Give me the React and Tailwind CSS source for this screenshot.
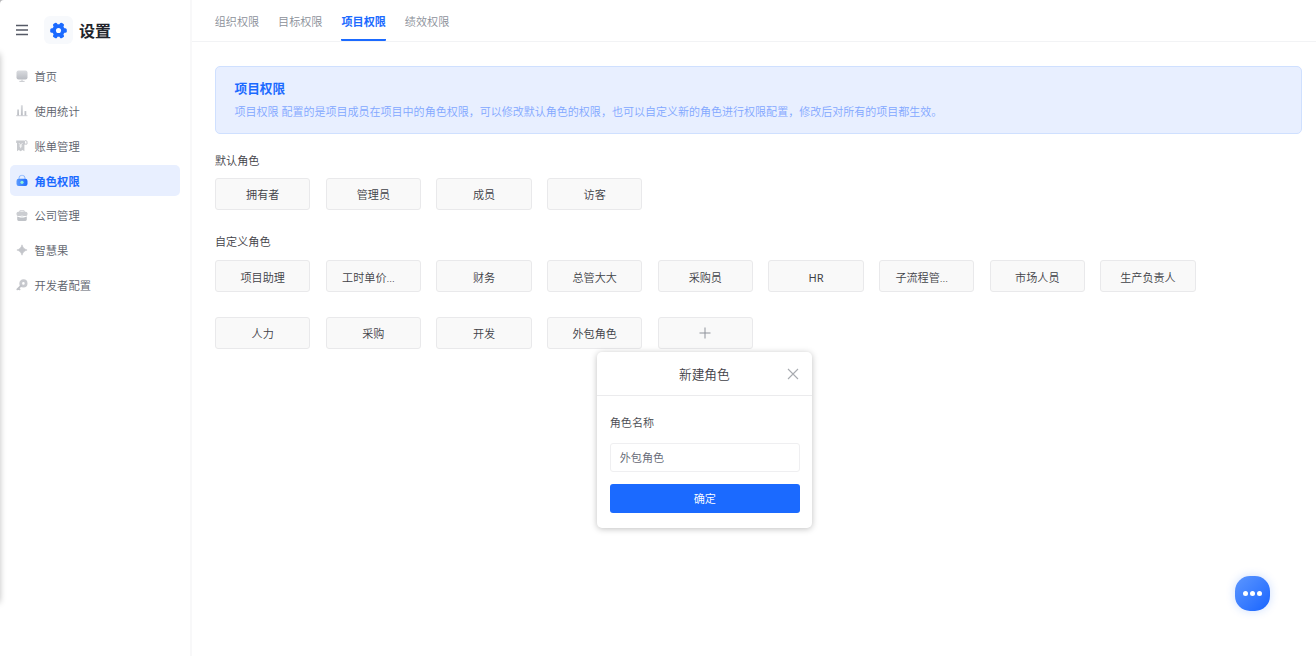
import React from "react";

const tabs = ["组织权限", "目标权限", "项目权限", "绩效权限"];
const defaultRoles = ["拥有者", "管理员", "成员", "访客"];
const customRoles = [
  "项目助理", "工时单价...", "财务", "总管大大", "采购员", "HR", "子流程管...", "市场人员", "生产负责人",
  "人力", "采购", "开发", "外包角色",
];

function Icon({ children }) {
  return (
    <svg viewBox="0 0 12 12" className="h-3 w-3 shrink-0 overflow-visible">
      <defs>
        <linearGradient id="grey" x1="0" y1="0" x2="0" y2="1">
          <stop offset="0" stopColor="#d9dbdf" />
          <stop offset="1" stopColor="#b9bcc2" />
        </linearGradient>
        <linearGradient id="blue" x1="0" y1="0" x2="1" y2="0">
          <stop offset="0" stopColor="#5c9bff" />
          <stop offset="1" stopColor="#1b6aff" />
        </linearGradient>
      </defs>
      {children}
    </svg>
  );
}

const menu = [
  {
    label: "首页",
    icon: (
      <Icon>
        <rect x="0.5" y="-0.4" width="11" height="9" rx="2" fill="url(#grey)" />
        <path d="M6 8.6v1.6M3.4 10.4h5.2" stroke="#c2c4c9" strokeWidth="0.9" fill="none" />
      </Icon>
    ),
  },
  {
    label: "使用统计",
    icon: (
      <Icon>
        <path d="M1.2 4.5H3v6H1.2zM4.9 0.2h1.9v10.3H4.9zM8.5 6h1.8v4.5H8.5z" fill="url(#grey)" />
        <path d="M0.2 10.7h11.3" stroke="#c2c4c9" strokeWidth="0.8" />
      </Icon>
    ),
  },
  {
    label: "账单管理",
    icon: (
      <Icon>
        <path d="M0.2 0.6H8.4v10.6L6.5 10 4.7 11.2 2.8 10 1 11.2V3H0.2z" fill="#c8cace" />
        <path d="M3 3.2l1.7 2 1.7-2M4.7 5.2v3M3.2 6h3" stroke="#fff" strokeWidth="0.8" fill="none" />
        <path d="M8.4 4.4V1.9a1.3 1.3 0 0 1 2.6 0v2.2H8.4" stroke="#c5c7cc" strokeWidth="1" fill="none" />
      </Icon>
    ),
  },
  {
    label: "角色权限",
    active: true,
    icon: (
      <Icon>
        <path d="M3 5V3A2.6 2.6 0 0 1 5.6.4h.8A2.6 2.6 0 0 1 9 3V5" stroke="#8db9ff" strokeWidth="1" fill="none" />
        <rect x="0.5" y="3.7" width="11" height="7.3" rx="2.2" fill="url(#blue)" />
        <circle cx="6" cy="7.3" r="1.6" fill="#8ff0d8" />
      </Icon>
    ),
  },
  {
    label: "公司管理",
    icon: (
      <Icon>
        <path d="M3.8 2V0.8h4.4V2" stroke="#c9cbd0" strokeWidth="1" fill="none" />
        <rect x="0.6" y="1.7" width="10.8" height="4.4" rx="1.5" fill="#cbcdd1" />
        <path d="M1.2 6.5l3 1h3.6l3-1v3a1.4 1.4 0 0 1-1.4 1.4H2.6a1.4 1.4 0 0 1-1.4-1.4z" fill="#c0c3c8" />
        <path d="M4.7 5.6h2.6v1.7H4.7z" fill="#eceef0" />
      </Icon>
    ),
  },
  {
    label: "智慧果",
    icon: (
      <Icon>
        <path d="M6 0.8C6.9 3.8 8.2 5.1 11.1 6 8.2 6.9 6.9 8.2 6 11.2 5.1 8.2 3.8 6.9 0.9 6 3.8 5.1 5.1 3.8 6 .8z" fill="#c3c5ca" stroke="#c3c5ca" strokeWidth="0.6" strokeLinejoin="round" />
      </Icon>
    ),
  },
  {
    label: "开发者配置",
    icon: (
      <Icon>
        <circle cx="7.4" cy="4.4" r="2.7" fill="none" stroke="#c7c9ce" strokeWidth="2.8" />
        <path d="M5.1 6.7L1.3 10.3M2.4 9.3l1.2 1.1" stroke="#c0c2c7" strokeWidth="1.8" strokeLinecap="round" />
      </Icon>
    ),
  },
];

function Role({ children }) {
  const truncated = children.endsWith("...");
  const latin = /^[A-Z]+$/.test(children);
  return (
    <div className="flex h-[32.4px] w-[95.4px] items-center justify-center whitespace-nowrap rounded-[3px] border border-[#e9e9eb] bg-[#f9f9f9] pt-[2px] text-[11.1px] text-[#3f4147]">
      <span className={truncated ? "pr-[10px]" : latin ? "font-normal" : ""}>{children}</span>
    </div>
  );
}

function CreateRolePopover() {
  return (
    <div className="absolute left-[-60.4px] top-[35px] h-[176.5px] w-[215.2px] rounded-[5px] bg-white shadow-[0_1px_6px_rgba(0,0,0,0.25)]">
      <div className="flex h-[44px] items-center border-b border-[#ebebed] pl-3 pr-[13.5px] pt-px">
        <div className="flex-1 pl-[12.5px] pt-[1px] text-center text-[12.7px] leading-5 text-[#3f4147]">新建角色</div>
        <svg viewBox="0 0 12 12" className="h-3 w-3" fill="none" stroke="#a8abb0" strokeWidth="1.1">
          <path d="M1 1l10 10M11 1L1 11" />
        </svg>
      </div>
      <div className="flex flex-col pl-[12.5px] pr-[12.7px] pt-[18.6px]">
        <div className="text-[11.1px] leading-[17px] text-[#494b51]">角色名称</div>
        <div className="mt-[11.4px] flex h-[29px] items-center rounded-[3px] border border-[#efeff1] px-[9px] pt-[1px] text-[11.1px] text-[#646875]">外包角色</div>
        <div className="mt-[12px] flex h-[29px] items-center justify-center rounded-[3px] bg-[#1b6aff] pt-[1px] text-[11.1px] text-white">确定</div>
      </div>
    </div>
  );
}

export default function App() {
  return (
    <div className="relative flex h-[656px] w-[1316px] overflow-hidden bg-white font-['Noto_Sans','Noto_Sans_CJK_SC',sans-serif] font-[350] leading-none">
      <aside className="h-full w-[192px] shrink-0 border-r-2 border-[#f8f8f9] pl-[9.5px] pr-[10px]">
        <div className="flex h-[60.5px] items-center pl-[6.5px]">
          <svg viewBox="0 0 12 12" className="h-3 w-3" stroke="#555a66" strokeWidth="1.5">
            <path d="M0 1.5h12M0 6h12M0 10.5h12" />
          </svg>
          <div className="ml-[16px] flex h-7 w-[29px] items-center justify-center rounded-[6px] bg-[#f7f9fc]">
            <svg viewBox="0 0 24 24" className="h-[17px] w-[17px]">
              <g fill="#1b6aff">
                <circle cx="12" cy="12" r="8.8" />
                <rect x="0.3" y="8.8" width="23.4" height="6.4" rx="2.2" />
                <rect x="0.3" y="8.8" width="23.4" height="6.4" rx="2.2" transform="rotate(60 12 12)" />
                <rect x="0.3" y="8.8" width="23.4" height="6.4" rx="2.2" transform="rotate(120 12 12)" />
              </g>
              <circle cx="12" cy="12" r="3.6" fill="#fff" />
            </svg>
          </div>
          <div className="ml-[6px] pt-px text-[16px] font-bold text-[#22242b]">设置</div>
        </div>
        <nav className="flex flex-col gap-[3.8px] pt-[0.5px]">
          {menu.map((item) => (
            <div
              key={item.label}
              className={
                item.active
                  ? "flex h-[31px] items-center gap-[6.5px] rounded-[5px] bg-[#e8efff] pl-[6.5px] text-[11.3px] font-bold text-[#1b6aff]"
                  : "flex h-[31px] items-center gap-[6.5px] rounded-[5px] pl-[6.5px] text-[11.3px] text-[#5d626c]"
              }
            >
              {item.icon}
              <span className="pt-[0.6px]">{item.label}</span>
            </div>
          ))}
        </nav>
      </aside>

      <main className="min-w-0 flex-1">
        <div className="flex h-[42px] gap-[19px] border-b border-[#f2f3f5] pl-[22.7px]">
          {tabs.map((tab) => (
            <div
              key={tab}
              className={
                tab === "项目权限"
                  ? "flex h-[41px] items-center rounded-b-[1px] border-b-2 border-[#1b6aff] pt-[5px] text-[11.1px] font-bold text-[#1b6aff]"
                  : "flex h-[41px] items-center border-b-2 border-transparent pt-[5px] text-[11.1px] text-[#8b9099]"
              }
            >
              {tab}
            </div>
          ))}
        </div>

        <div className="pl-[23px] pr-[14.5px] pt-6">
          <section className="flex h-[68px] flex-col rounded-[5px] border border-[#cfe0ff] bg-[#e8efff] pl-[18.5px] pt-[11px]">
            <h2 className="text-[12.7px] font-bold leading-5 text-[#1b6aff]">项目权限</h2>
            <p className="mt-[6px] text-[11.03px] leading-4 text-[#82a7ff]">
              项目权限 配置的是项目成员在项目中的角色权限，可以修改默认角色的权限，也可以自定义新的角色进行权限配置，修改后对所有的项目都生效。
            </p>
          </section>

          <h3 className="mt-[17.5px] text-[11.1px] leading-[18px] text-[#3f4147]">默认角色</h3>
          <div className="mt-[8px] flex gap-[15.27px]">
            {defaultRoles.map((role) => (
              <Role key={role}>{role}</Role>
            ))}
          </div>

          <h3 className="mt-[23.5px] text-[11.1px] leading-[18px] text-[#3f4147]">自定义角色</h3>
          <div className="mt-[8.5px] grid grid-cols-[repeat(9,95.4px)] gap-x-[15.27px] gap-y-[24.4px]">
            {customRoles.map((role) => (
              <Role key={role}>{role}</Role>
            ))}
            <div className="relative">
              <div className="flex h-[32.4px] w-[95.4px] items-center justify-center rounded-[3px] border border-[#e9e9eb] bg-[#f9f9f9]">
                <svg viewBox="0 0 12 12" className="h-3 w-3" stroke="#8f939b" strokeWidth="1">
                  <path d="M6 0.5v11M0.5 6h11" />
                </svg>
              </div>
              <CreateRolePopover />
            </div>
          </div>
        </div>
      </main>

      <div className="absolute left-[-8px] top-[53px] h-[550px] w-2 rounded shadow-[0_0_6px_rgba(0,0,0,0.25)]" />
      <svg viewBox="0 0 4 4" className="absolute left-0 top-0 h-1 w-1">
        <path d="M0 0h4Q0 0 0 4z" fill="#b5b5b8" />
      </svg>

      <button className="absolute left-[1234.5px] top-[575.5px] flex h-[35px] w-[35px] items-center justify-center gap-[2px] rounded-[15px] bg-gradient-to-br from-[#5c96ff] to-[#1563ff] shadow-[0_0_10px_rgba(27,106,255,0.22)]">
        <span className="h-[5px] w-[5px] rounded-full bg-white" />
        <span className="h-[5px] w-[5px] rounded-full bg-white" />
        <span className="h-[5px] w-[5px] rounded-full bg-white" />
      </button>
    </div>
  );
}
